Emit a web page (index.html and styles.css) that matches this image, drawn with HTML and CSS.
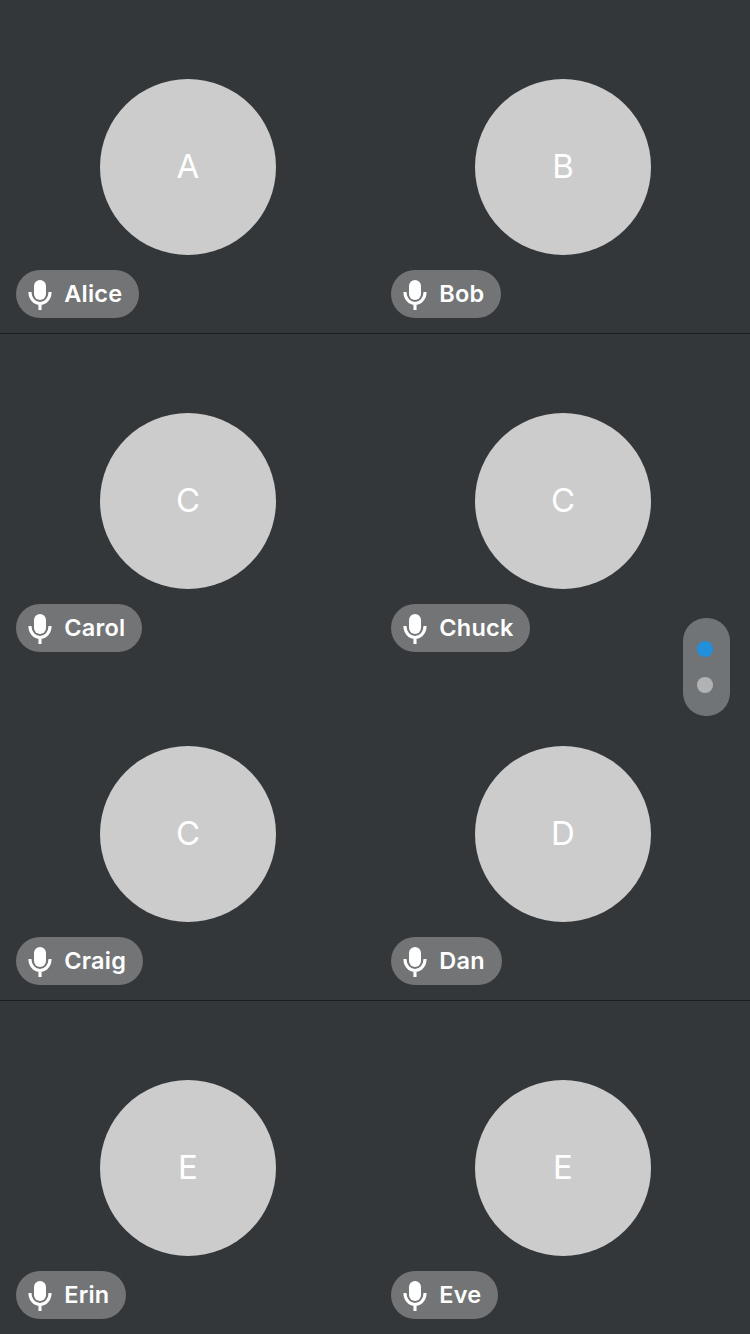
FILE: index.html
```html
<!DOCTYPE html>
<html lang="en">
<head>
<meta charset="utf-8">
<title>Call</title>
<link rel="stylesheet" href="styles.css">
</head>
<body>
<svg width="0" height="0" class="defs"><symbol id="mic" viewBox="0 0 24 32"><rect x="6" y="2" width="12" height="20" rx="6" fill="#fff"/><path d="M2 14v.5a10 11 0 0 0 20 0v-.5M12 26v6" fill="none" stroke="#fff" stroke-width="3.1"/></symbol></svg>
<main class="grid">
<section class="tile"><div class="avatar">A</div><div class="badge"><svg class="mic"><use href="#mic"/></svg><span class="name">Alice</span></div></section>
<section class="tile"><div class="avatar">B</div><div class="badge"><svg class="mic"><use href="#mic"/></svg><span class="name">Bob</span></div></section>
<section class="tile line"><div class="avatar">C</div><div class="badge"><svg class="mic"><use href="#mic"/></svg><span class="name">Carol</span></div></section>
<section class="tile line"><div class="avatar">C</div><div class="badge"><svg class="mic"><use href="#mic"/></svg><span class="name">Chuck</span></div></section>
<section class="tile"><div class="avatar">C</div><div class="badge"><svg class="mic"><use href="#mic"/></svg><span class="name">Craig</span></div></section>
<section class="tile"><div class="avatar">D</div><div class="badge"><svg class="mic"><use href="#mic"/></svg><span class="name">Dan</span></div></section>
<section class="tile line"><div class="avatar">E</div><div class="badge"><svg class="mic"><use href="#mic"/></svg><span class="name">Erin</span></div></section>
<section class="tile line"><div class="avatar">E</div><div class="badge"><svg class="mic"><use href="#mic"/></svg><span class="name">Eve</span></div></section>
</main>
<nav class="pager"><i class="dot active"></i><i class="dot"></i></nav>
</body>
</html>
```
FILE: styles.css
```css
* { box-sizing: border-box; }
body { margin: 0; background: #33373a; font-family: Inter, sans-serif; color: #fff; }
.defs { position: absolute; }
.grid { display: grid; grid-template-columns: 375px 375px; grid-template-rows: 333px 334px 333px 334px; }
.tile { display: flex; flex-direction: column; align-items: flex-start; padding: 79px 16px 0; }
.line { border-top: 1px solid #1b1d1e; }
.avatar { align-self: center; width: 176px; height: 176px; border-radius: 50%; background: #ccc; font-size: 33px; font-weight: 400; line-height: 174px; text-align: center; padding-left: 1px; flex: none; }
.badge { display: flex; align-items: center; height: 48px; margin-top: 15px; padding: 0 16.8px 0 12px; border-radius: 24px; background: #737476; font-size: 23.5px; font-weight: 600; letter-spacing: 0.25px; gap: 12.2px; }
.name { line-height: 28px; }
.mic { width: 24px; height: 32px; }
.pager { position: absolute; left: 683px; top: 618px; width: 47px; height: 98px; border-radius: 23px; background: #717477; display: flex; flex-direction: column; align-items: center; justify-content: center; gap: 20.2px; padding-right: 2.6px; }
.dot { width: 15.6px; height: 15.6px; border-radius: 50%; background: #b1b2b4; }
.dot.active { background: #228fdb; }
```
